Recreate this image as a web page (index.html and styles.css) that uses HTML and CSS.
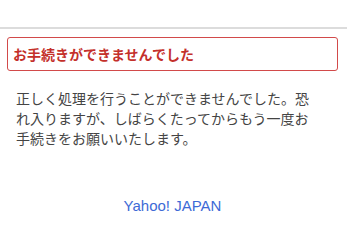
FILE: index.html
```html
<!DOCTYPE html>
<html lang="ja">
<head>
<meta charset="utf-8">
<link rel="stylesheet" href="styles.css">
</head>
<body>
<header class="header"></header>
<main class="content">
  <div class="error-box">
    <h1 class="error-title">お手続きができませんでした</h1>
  </div>
  <p class="message">正しく処理を行うことができませんでした。恐れ入りますが、しばらくたってからもう一度お手続きをお願いいたします。</p>
  <div class="footer-link"><a href="#" class="home-link">Yahoo! JAPAN</a></div>
</main>
</body>
</html>
```
FILE: styles.css
```css
html, body {
  margin: 0;
  padding: 0;
  background: #fff;
}
body {
  font-family: "Noto Sans CJK JP", "Noto Sans", sans-serif;
  color: #444;
}
.header {
  height: 27px;
  border-bottom: 2px solid #dcdcdc;
}
.content {
  padding: 8px 9px 0 7px;
}
.error-box {
  border: 1px solid #d24a4a;
  border-radius: 3px;
  height: 32px;
  display: flex;
  align-items: center;
  padding: 0 5px;
}
.error-title {
  margin: 0;
  font-size: 14px;
  font-weight: bold;
  color: #c4302b;
  line-height: 20px;
}
.message {
  margin: 17px 0 0 9px;
  width: 300px;
  font-size: 14px;
  line-height: 20px;
  color: #444;
}
.footer-link {
  text-align: center;
  margin-top: 44px;
}
.home-link {
  font-family: "Liberation Sans", Arial, sans-serif;
  font-size: 15px;
  color: #3d6ad6;
  text-decoration: none;
}
```
